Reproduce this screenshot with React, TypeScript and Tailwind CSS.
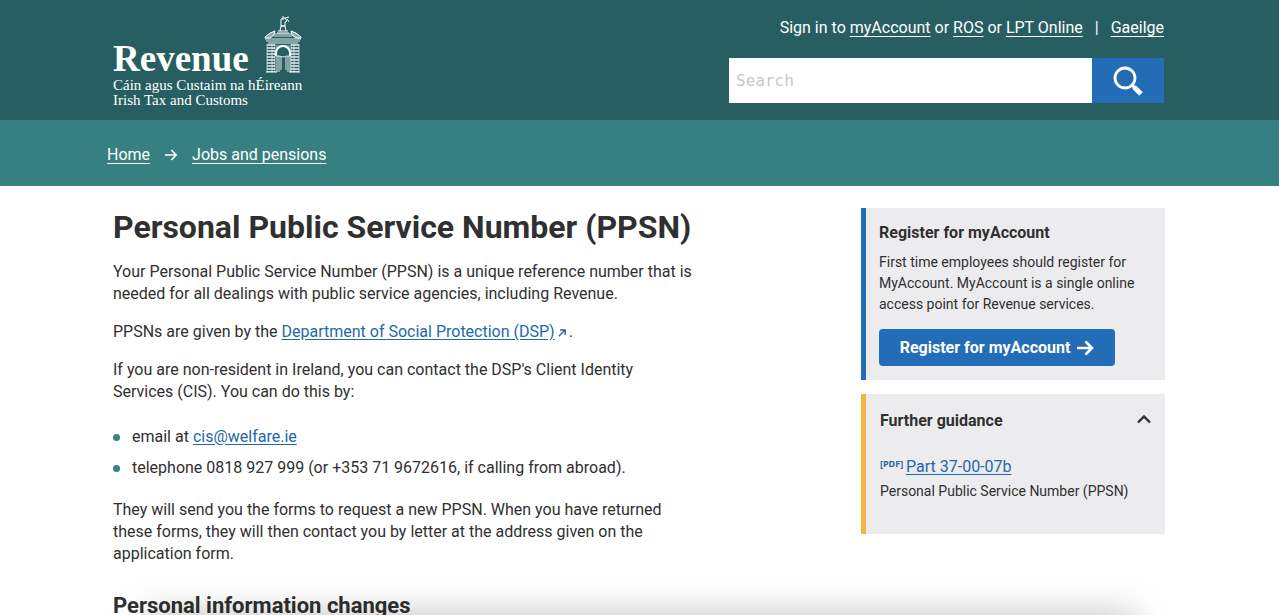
import { useState } from "react";
import type { ReactNode } from "react";

const LINK = "text-[#2368a8] underline underline-offset-2";

function GateLogo() {
  return (
    <svg viewBox="0 0 40 60" className="h-[60px] w-10" fill="none" stroke="#fff" aria-hidden="true">
      {/* statue */}
      <path d="M20 2v4M18 5l4-1 2 3-2 1v4h-4V8zM22 4l4-1M24 5l2 3" strokeWidth="1" />
      <path d="M17 17l1-5h4l1 5M15 17h10M14 19h12" strokeWidth="1" />
      {/* pediment */}
      <path d="M2 23l5-4 5-2-1 4-4 3H2zM38 23l-5-4-5-2 1 4 4 3h5z" strokeWidth="1" fill="#fff" fillOpacity=".5" />
      <path d="M12 20h16M11 22h18M2 25h36M3 27h34M5 29h30" strokeWidth="1" opacity=".85" />
      {/* pillars */}
      <path d="M4 30v28M9 30v28M12 30v28M28 30v28M31 30v28M36 30v28" strokeWidth="1" opacity=".6" />
      <path d="M8 30v28M32 30v28" strokeWidth="8" strokeDasharray="2 1" opacity=".65" />
      {/* arch and gates */}
      <path d="M13 42v-3a7 7 0 0 1 14 0v3" strokeWidth="2" />
      <path d="M13 32h14M13 34h3M24 34h3" strokeWidth="1" opacity=".7" />
      <path d="M13 42h3q4 2 8 0h3M14 42v16M16 42v16M18 43v13M25 42v16M27 42v16M23 43v13" strokeWidth="1" opacity=".85" />
      <path d="M3 58h11M26 58h11" strokeWidth="1" />
    </svg>
  );
}

function ArrowRight({ className, strokeWidth = 2 }: { className: string; strokeWidth?: number }) {
  return (
    <svg viewBox="0 0 18 16" className={className} fill="none" stroke="currentColor" strokeWidth={strokeWidth} aria-hidden="true">
      <path d="M1 8h15M9.5 1.5L16 8l-6.5 6.5" />
    </svg>
  );
}

function Header() {
  return (
    <header className="bg-[#265e62] text-white">
      <div className="mx-auto flex h-[120px] max-w-[1280px] justify-between pr-[115px] pl-[113px]">
        <a href="#" className="flex flex-col pt-3.5 font-['Liberation_Serif',serif]" aria-label="Revenue home">
          <span className="flex items-end gap-3.5">
            <span className="text-[37px] leading-[30px] font-bold">Revenue</span>
            <GateLogo />
          </span>
          <span className="pt-1 text-[15px] leading-[15px]">Cáin agus Custaim na hÉireann</span>
          <span className="text-[15px] leading-[15px]">Irish Tax and Customs</span>
        </a>
        <div className="flex w-[435px] flex-col gap-[18px] pt-4">
          <p className="text-right leading-6">
            Sign in to <a href="#" className="underline underline-offset-3">myAccount</a> or{" "}
            <a href="#" className="underline underline-offset-3">ROS</a> or{" "}
            <a href="#" className="underline underline-offset-3">LPT Online</a>
            <span className="mx-3">|</span>
            <a href="#" className="underline underline-offset-3">Gaeilge</a>
          </p>
          <form className="flex h-[45px]" onSubmit={(e) => e.preventDefault()}>
            <input
              type="search"
              aria-label="Search"
              placeholder="Search"
              className="min-w-0 flex-1 bg-white px-[7px] font-['DejaVu_Sans_Mono',monospace] text-base text-[#333] placeholder:text-[#c8c8c8]"
            />
            <button type="submit" aria-label="Submit search" className="flex w-[72px] items-center justify-center bg-[#236db7]">
              <svg viewBox="0 0 30 30" className="size-[30px]" fill="none" stroke="#fff" aria-hidden="true">
                <circle cx="12" cy="12" r="10" strokeWidth="2.8" />
                <path d="M19 19l3 3" strokeWidth="3" />
                <path d="M21 21l7 7" strokeWidth="5" />
              </svg>
            </button>
          </form>
        </div>
      </div>
    </header>
  );
}

function Breadcrumb() {
  return (
    <nav aria-label="Breadcrumb" className="bg-[#378081] text-white">
      <ol className="mx-auto flex h-[66px] max-w-[1280px] items-center gap-3.5 px-[107px] pt-1">
        <li><a href="#" className="underline underline-offset-3">Home</a></li>
        <li aria-hidden="true"><ArrowRight className="h-3 w-3.5" /></li>
        <li><a href="#" className="underline underline-offset-3">Jobs and pensions</a></li>
      </ol>
    </nav>
  );
}

function Bullet({ children }: { children: ReactNode }) {
  return (
    <li className="flex items-center gap-3">
      <span className="size-[7px] rounded-full bg-[#37857c]" />
      <span>{children}</span>
    </li>
  );
}

function Article() {
  return (
    <main className="w-[582px] pt-5">
      <h1 className="text-[32px] leading-[42px] font-bold whitespace-nowrap">Personal Public Service Number (PPSN)</h1>
      <div className="mt-[13px] flex flex-col gap-4">
        <p>
          Your Personal Public Service Number (PPSN) is a unique reference number that is needed for all
          dealings with public service agencies, including Revenue.
        </p>
        <p>
          PPSNs are given by the <a href="#" className={LINK}>Department of Social Protection (DSP)</a>
          <svg viewBox="0 0 10 10" className="mx-[3px] inline size-2 align-baseline" fill="none" stroke="#2368a8" strokeWidth="1.8" aria-hidden="true">
            <path d="M1 9l7.5-7.5M2.5 1.2H9V7.5" />
          </svg>
          .
        </p>
        <p>
          If you are non-resident in Ireland, you can contact the DSP's Client Identity Services (CIS). You
          can do this by:
        </p>
      </div>
      <ul className="mt-[23px] flex flex-col gap-[9px]">
        <Bullet>email at <a href="#" className={LINK}>cis@welfare.ie</a></Bullet>
        <Bullet>telephone 0818 927 999 (or +353 71 9672616, if calling from abroad).</Bullet>
      </ul>
      <p className="mt-5">
        They will send you the forms to request a new PPSN. When you have returned these forms, they will
        then contact you by letter at the address given on the application form.
      </p>
      <h2 className="mt-[26px] text-[22px] leading-[30px] font-bold">Personal information changes</h2>
    </main>
  );
}

function Sidebar() {
  const [open, setOpen] = useState(true);

  return (
    <aside className="flex w-[304px] shrink-0 flex-col gap-3.5 pt-[22px]">
      <section className="border-l-5 border-[#236db7] bg-[#ececee] px-[13px] py-3.5">
        <h2 className="font-bold">Register for myAccount</h2>
        <p className="mt-2 text-sm leading-[21px]">
          First time employees should register for MyAccount. MyAccount is a single online access point for
          Revenue services.
        </p>
        <a href="#" className="mt-3.5 flex h-[37px] w-[236px] items-center justify-center gap-1.5 rounded-sm bg-[#236db7] font-bold text-white">
          Register for myAccount
          <ArrowRight className="h-4 w-[18px]" strokeWidth={2.6} />
        </a>
      </section>
      <section className="min-h-[140px] border-l-5 border-[#f8b440] bg-[#ececee] px-3.5 pt-4">
        <h2 className="font-bold">
          <button type="button" aria-expanded={open} onClick={() => setOpen(!open)} className="flex w-full justify-between">
            Further guidance
            <svg viewBox="0 0 14 10" className={open ? "mt-1 h-2.5 w-3.5" : "mt-1 h-2.5 w-3.5 rotate-180"} fill="none" stroke="currentColor" strokeWidth="2.4" aria-hidden="true">
              <path d="M1 8.5l6-6 6 6" />
            </svg>
          </button>
        </h2>
        {open && (
          <div className="pt-6">
            <a href="#" className="flex text-[#2368a8]">
              <span className="w-[26px] font-['Noto_Sans',sans-serif] text-[9px] leading-4 font-bold">[PDF]</span>
              <span className="underline underline-offset-2">Part 37-00-07b</span>
            </a>
            <p className="text-sm leading-[26px]">Personal Public Service Number (PPSN)</p>
          </div>
        )}
      </section>
    </aside>
  );
}

export default function App() {
  return (
    <div className="h-screen overflow-hidden bg-white font-[Roboto,sans-serif] text-base leading-[22px] text-[#303030]">
      <Header />
      <Breadcrumb />
      <div className="mx-auto flex max-w-[1280px] justify-between pr-[114px] pl-[113px]">
        <Article />
        <Sidebar />
      </div>
      <div className="fixed inset-x-36 top-full h-16 shadow-[0_0_36px_rgba(0,0,0,0.25)]" />
    </div>
  );
}
